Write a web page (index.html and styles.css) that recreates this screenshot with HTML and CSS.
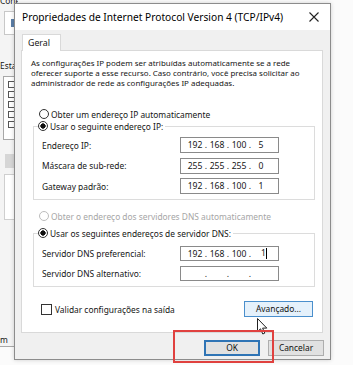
FILE: index.html
```html
<!DOCTYPE html>
<html lang="pt">
<head>
    <meta charset="UTF-8">
    <title>Propriedades de Internet Protocol Version 4 (TCP/IPv4)</title>
    <link rel="stylesheet" href="styles.css">
</head>
<body>
    <div class="desktop">
        <!-- janela de trás (propriedades do adaptador) -->
        <div class="back-window">
            <p class="back-label back-top">Conectar-se usando:</p>
            <div class="back-adapter"><span class="back-icon"></span></div>
            <p class="back-label back-items">Esta conexão utiliza os seguintes itens:</p>
            <div class="back-list">
                <span></span><span></span><span></span><span></span><span></span>
            </div>
            <div class="back-button"></div>
            <div class="back-desc"></div>
            <p class="back-label back-bottom">m</p>
        </div>

        <div class="dialog">
            <div class="titlebar">
                <span class="title">Propriedades de Internet Protocol Version 4 (TCP/IPv4)</span>
                <svg class="close" width="10" height="10" viewBox="0 0 10 10">
                    <path d="M0.5 0.5 L9.5 9.5 M9.5 0.5 L0.5 9.5" stroke="#222" stroke-width="1.1" fill="none"/>
                </svg>
            </div>
            <div class="tabs">
                <span class="tab">Geral</span>
            </div>
            <div class="panel">
                <p class="intro">As configurações IP podem ser atribuídas automaticamente se a rede oferecer suporte a esse recurso. Caso contrário, você precisa solicitar ao administrador de rede as configurações IP adequadas.</p>

                <div class="option first-option"><span class="radio"></span>Obter um endereço IP automaticamente</div>

                <fieldset class="group ip-group">
                    <legend class="option"><span class="radio checked"></span>Usar o seguinte endereço IP:</legend>
                    <div class="row">
                        <span class="label">Endereço IP:</span>
                        <span class="ip"><b>192</b><i>.</i><b>168</b><i>.</i><b>100</b><i>.</i><b>5</b></span>
                    </div>
                    <div class="row">
                        <span class="label">Máscara de sub-rede:</span>
                        <span class="ip"><b>255</b><i>.</i><b>255</b><i>.</i><b>255</b><i>.</i><b>0</b></span>
                    </div>
                    <div class="row">
                        <span class="label">Gateway padrão:</span>
                        <span class="ip"><b>192</b><i>.</i><b>168</b><i>.</i><b>100</b><i>.</i><b>1</b></span>
                    </div>
                </fieldset>

                <div class="option disabled dns-auto"><span class="radio"></span>Obter o endereço dos servidores DNS automaticamente</div>

                <fieldset class="group dns-group">
                    <legend class="option"><span class="radio checked"></span>Usar os seguintes endereços de servidor DNS:</legend>
                    <div class="row">
                        <span class="label">Servidor DNS preferencial:</span>
                        <span class="ip"><b>192</b><i>.</i><b>168</b><i>.</i><b>100</b><i>.</i><b class="caret">1</b></span>
                    </div>
                    <div class="row">
                        <span class="label">Servidor DNS alternativo:</span>
                        <span class="ip"><b></b><i>.</i><b></b><i>.</i><b></b><i>.</i><b></b></span>
                    </div>
                </fieldset>

                <div class="panel-foot">
                    <div class="option"><span class="checkbox"></span>Validar configurações na saída</div>
                    <button class="btn btn-hover">Avançado...</button>
                </div>
            </div>
            <div class="actions">
                <button class="btn btn-default">OK</button>
                <button class="btn">Cancelar</button>
            </div>
        </div>

        <!-- ponteiro do mouse e destaque vermelho -->
        <svg class="cursor" width="11" height="17" viewBox="0 0 11 17">
            <path d="M0.5 0.5 L0.5 13.5 L3.5 10.8 L5.8 16 L7.8 15.1 L5.6 10.1 L9.8 10.1 Z" fill="#fff" stroke="#222" stroke-width="1"/>
        </svg>
        <div class="highlight"></div>
    </div>
</body>
</html>
```

FILE: styles.css
```css
body {
    margin: 0;
    background-color: #fff;
    font-family: "Noto Sans", "Open Sans", sans-serif;
    font-size: 8.4px;
    color: #151515;
}
.desktop {
    position: relative;
    width: 353px;
    height: 365px;
    overflow: hidden;
    background-color: #fbfbfb;
}

/* janela de trás */
.back-window {
    position: absolute;
    left: -60px;
    top: -4px;
    width: 78px;
    height: 350px;
    overflow: hidden;
    background-color: #f4f4f4;
    border-bottom: 1px solid #a8a8a8;
}
.back-label {
    margin: 0;
    padding-left: 60px;
    white-space: nowrap;
    line-height: 10px;
}
.back-top {
    margin-top: 0;
}
.back-adapter {
    margin: 5px 0 0 64px;
    height: 22px;
    border: 1px solid #c8c8c8;
    background-color: #fff;
}
.back-icon {
    display: block;
    width: 5px;
    height: 8px;
    margin: 7px 0 0 6px;
    background-color: #5b7fa8;
}
.back-items {
    margin-top: 26px;
}
.back-list {
    display: flex;
    flex-direction: column;
    gap: 3px;
    margin: 5px 0 0 63px;
    height: 58px;
    padding: 4px 0 0 4px;
    border: 1px solid #a8a8a8;
    background-color: #fff;
}
.back-list span {
    width: 7px;
    height: 5px;
    border: 1px solid #555;
}
.back-button {
    margin: 14px 0 0 65px;
    height: 14px;
    background-color: #d6d6d6;
}
.back-desc {
    margin: 6px 0 0 64px;
    height: 44px;
    border: 1px solid #cfcfcf;
    border-right: none;
    background-color: #fff;
}
.back-bottom {
    margin-top: 115px;
}

/* diálogo */
.dialog {
    position: absolute;
    left: 14px;
    top: 3px;
    width: 315px;
    height: 355px;
    border: 1px solid #8c8c8c;
    background-color: #f0f0f0;
    box-shadow: 0 0 4px rgba(0, 0, 0, 0.18);
}
.titlebar {
    display: flex;
    align-items: center;
    justify-content: space-between;
    box-sizing: border-box;
    height: 26px;
    padding: 0 7px 1px 7px;
    background-color: #fff;
}
.title {
    font-size: 10.2px;
    color: #000;
}
.close {
    margin-right: 4px;
}
.tabs {
    display: flex;
    padding: 3px 0 0 7px;
}
.tab {
    height: 16px;
    line-height: 16px;
    padding: 0 10px 0 5px;
    background-color: #fff;
    border: 1px solid #d9d9d9;
    border-bottom: none;
    font-size: 8.8px;
    position: relative;
    top: 1px;
}
.panel {
    margin-left: 6px;
    width: 291px;
    height: 274px;
    padding: 7px 0 0 9px;
    background-color: #fff;
    border: 1px solid #d9d9d9;
}
.intro {
    margin: 0;
    width: 270px;
    font-size: 7.95px;
    line-height: 10px;
}
.option {
    display: flex;
    align-items: center;
    height: 12px;
    white-space: nowrap;
}
.first-option {
    margin: 20px 0 0 8px;
}
.radio {
    display: inline-block;
    box-sizing: border-box;
    width: 10px;
    height: 10px;
    margin-right: 2px;
    border: 1px solid #333;
    border-radius: 50%;
    background-color: #fff;
}
.radio.checked {
    background: radial-gradient(circle, #111 0 2.4px, #fff 2.9px);
}
.disabled {
    color: #a6a6a6;
}
.disabled .radio {
    border-color: #bcbcbc;
}
.group {
    margin: 0 0 0 2px;
    width: 282px;
    box-sizing: border-box;
    min-inline-size: 0;
    border: 1px solid #dcdcdc;
    padding: 5px 0 5px 8px;
}
.group legend {
    padding: 0 2px 0 0;
    margin-left: -4px;
}
.ip-group .row + .row {
    margin-top: 4.5px;
}
.dns-group {
    padding-top: 7px;
}
.dns-group .row + .row {
    margin-top: 5px;
}
.dns-group .ip {
    height: 15px;
}
.row {
    display: flex;
    align-items: center;
}
.label {
    width: 138px;
}
.ip {
    display: flex;
    align-items: center;
    box-sizing: border-box;
    width: 99px;
    height: 16px;
    padding-left: 5px;
    border: 1px solid #8a8a8a;
    background-color: #fff;
    font-size: 8.6px;
}
.ip b {
    width: 18px;
    font-weight: normal;
    text-align: center;
}
.ip i {
    width: 4px;
    font-style: normal;
    text-align: center;
}
.caret {
    border-right: 1px solid #000;
    width: 10px !important;
    margin-left: 4px;
    height: 11px;
    line-height: 11px;
    text-align: right !important;
}
.dns-auto {
    margin: 10px 0 5px 8px;
}
.panel-foot {
    display: flex;
    align-items: center;
    justify-content: space-between;
    margin: 14px 9px 0 10px;
}
.checkbox {
    display: inline-block;
    box-sizing: border-box;
    width: 11px;
    height: 11px;
    margin-right: 3px;
    border: 1px solid #333;
    background-color: #fff;
}
.btn {
    display: block;
    box-sizing: border-box;
    height: 16px;
    padding: 0;
    border: 1px solid #adadad;
    background-color: #e1e1e1;
    font-family: inherit;
    font-size: 8.4px;
    line-height: 12px;
    color: #111;
}
.btn-hover {
    width: 69px;
    border-color: #4a8fcc;
    background-color: #e5f1fb;
}
.actions {
    display: flex;
    justify-content: flex-end;
    gap: 8px;
    padding: 7px 6px 0 0;
}
.actions .btn {
    width: 56px;
}
.btn-default {
    border: 2px solid #2f74b5;
}

.cursor {
    position: absolute;
    left: 257px;
    top: 318px;
}
.highlight {
    position: absolute;
    left: 173px;
    top: 330px;
    width: 97px;
    height: 29px;
    border: 2px solid #e0413f;
}
```
